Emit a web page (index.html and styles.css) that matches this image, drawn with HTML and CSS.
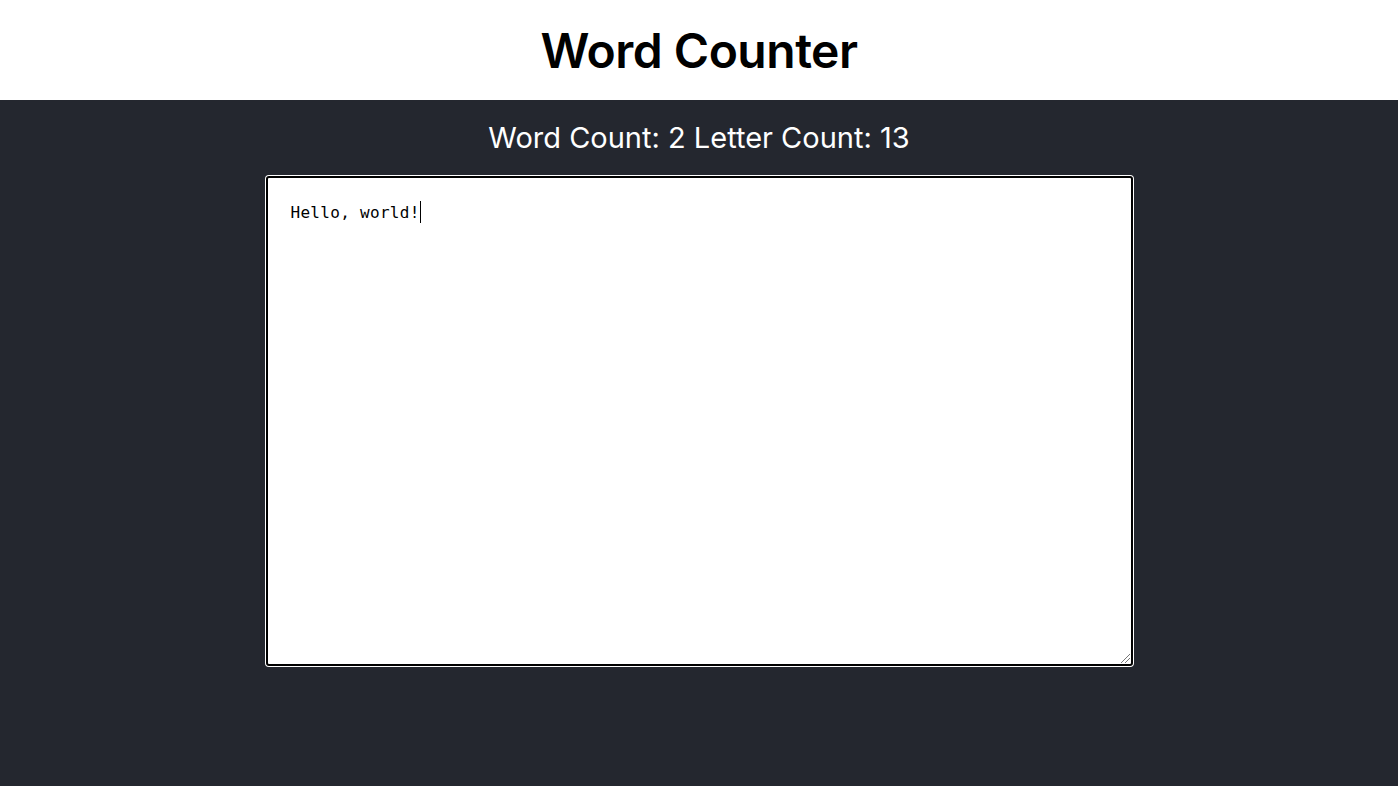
FILE: index.html
```html
<!DOCTYPE html>
<html lang="en">
<head>
<meta charset="utf-8">
<title>Word Counter</title>
<link rel="stylesheet" href="styles.css">
</head>
<body>
<header class="header">
  <h1 class="title">Word Counter</h1>
</header>
<main class="main">
  <p class="counts">Word Count: 2 Letter Count: 13</p>
  <div class="editor">
    <span class="text">Hello, world!</span><span class="caret"></span>
    <span class="grip"></span>
  </div>
</main>
</body>
</html>
```
FILE: styles.css
```css
html, body {
  margin: 0;
  padding: 0;
  height: 100%;
}
body {
  font-family: Inter, "Open Sans", "Noto Sans", sans-serif;
  background: #24272f;
  display: flex;
  flex-direction: column;
}
.header {
  background: #ffffff;
  height: 100px;
  display: flex;
  align-items: center;
  justify-content: center;
}
.title {
  margin: 0;
  font-size: 48px;
  font-weight: 600;
  color: #000;
  letter-spacing: -0.5px;
}
.main {
  flex: 1;
  display: flex;
  flex-direction: column;
  align-items: center;
}
.counts {
  margin: 18px 0 0;
  color: #ffffff;
  font-size: 29px;
  font-weight: 400;
  line-height: 40px;
}
.editor {
  position: relative;
  margin-top: 18px;
  box-sizing: border-box;
  width: 867px;
  height: 490px;
  background: #ffffff;
  border: 2px solid #000000;
  border-radius: 3px;
  box-shadow: 0 0 0 1px #ffffff;
  padding: 25px 23px;
  font-family: "DejaVu Sans Mono", "Liberation Mono", monospace;
  font-size: 16px;
  line-height: 20px;
  color: #000;
  display: flex;
  align-items: flex-start;
}
.text {
  white-space: pre;
  letter-spacing: 0.3px;
}
.caret {
  display: inline-block;
  width: 1px;
  height: 22px;
  background: #000;
  margin-top: -2px;
}
.grip {
  position: absolute;
  right: 1px;
  bottom: 1px;
  width: 9px;
  height: 9px;
  background: linear-gradient(135deg, transparent 45%, #777 45%, #777 52%, transparent 52%, transparent 70%, #777 70%, #777 77%, transparent 77%);
}
```
